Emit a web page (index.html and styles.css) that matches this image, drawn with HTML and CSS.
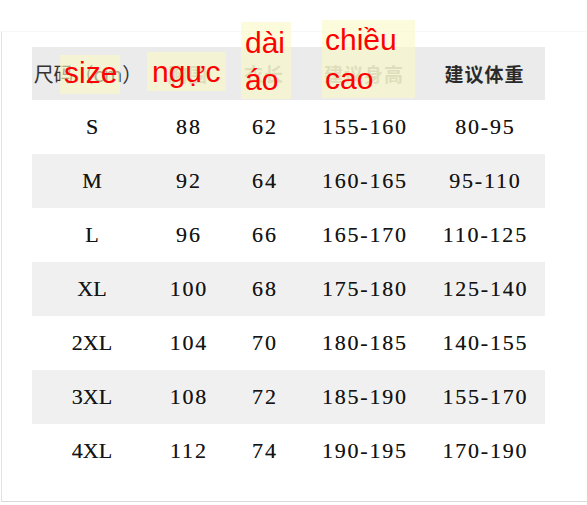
FILE: index.html
```html
<!DOCTYPE html>
<html lang="zh">
<head>
<meta charset="utf-8">
<title>Size chart</title>
<link rel="stylesheet" href="styles.css">
</head>
<body>
<div class="frame">
  <div class="chart">
    <div class="row head">
      <div class="cell h1">尺码（cm）</div>
      <div class="cell faded">胸围</div>
      <div class="cell faded">衣长</div>
      <div class="cell faded">建议身高</div>
      <div class="cell dark">建议体重</div>
    </div>
    <div class="row"><div class="cell c1">S</div><div class="cell">88</div><div class="cell">62</div><div class="cell">155-160</div><div class="cell">80-95</div></div>
    <div class="row alt"><div class="cell c1">M</div><div class="cell">92</div><div class="cell">64</div><div class="cell">160-165</div><div class="cell">95-110</div></div>
    <div class="row"><div class="cell c1">L</div><div class="cell">96</div><div class="cell">66</div><div class="cell">165-170</div><div class="cell">110-125</div></div>
    <div class="row alt"><div class="cell c1">XL</div><div class="cell">100</div><div class="cell">68</div><div class="cell">175-180</div><div class="cell">125-140</div></div>
    <div class="row"><div class="cell c1">2XL</div><div class="cell">104</div><div class="cell">70</div><div class="cell">180-185</div><div class="cell">140-155</div></div>
    <div class="row alt"><div class="cell c1">3XL</div><div class="cell">108</div><div class="cell">72</div><div class="cell">185-190</div><div class="cell">155-170</div></div>
    <div class="row"><div class="cell c1">4XL</div><div class="cell">112</div><div class="cell">74</div><div class="cell">190-195</div><div class="cell">170-190</div></div>
  </div>
  <div class="label l-size">size</div>
  <div class="label l-nguc">ngực</div>
  <div class="label l-dai">dài<br>áo</div>
  <div class="label l-chieu">chiều<br>cao</div>
</div>
</body>
</html>
```

FILE: styles.css
```css
html, body {
  margin: 0;
  padding: 0;
  background: #ffffff;
}

.frame {
  position: relative;
  margin: 31px 0 0 1px;
  height: 454px;
  border-left: 1px solid #e2e2e2;
  border-top: 1px solid #f7f7f7;
  border-bottom: 1px solid #d9d9d9;
  padding: 15px 0 0 30px;
  box-sizing: content-box;
}

.chart {
  width: 513px;
  display: flex;
  flex-direction: column;
}

.row {
  display: grid;
  grid-template-columns: 120px 72px 80px 120px 121px;
  height: 54px;
  align-items: center;
}

.row.head {
  height: 53px;
  background: #ebebeb;
}

.row.alt {
  background: #f0f0f0;
}

.cell {
  text-align: center;
  font-family: "Liberation Serif", serif;
  font-size: 22px;
  letter-spacing: 1.8px;
  padding-left: 1.8px;
  color: #141414;
  text-shadow: 0 0 0.5px rgba(0, 0, 0, 0.5);
}

.cell.c1 {
  letter-spacing: 0;
  padding-left: 0;
}

.head .cell {
  font-family: "Noto Sans CJK SC", sans-serif;
  font-size: 19px;
  letter-spacing: 1px;
  padding-left: 0;
  text-shadow: none;
}

.head .h1 {
  color: #333333;
  font-size: 20px;
  letter-spacing: 0;
  padding-right: 8px;
}

.head .faded {
  color: #b4b4b0;
  font-weight: 700;
}

.head .dark {
  color: #2a2a2a;
  font-weight: 700;
}

.label {
  position: absolute;
  box-sizing: border-box;
  background: rgba(250, 250, 197, 0.6);
  color: #ff0000;
  font-family: "Liberation Sans", Arial, sans-serif;
  font-size: 30px;
  padding: 0 4px;
  white-space: nowrap;
}

.l-size {
  left: 58px;
  top: 23px;
  width: 60px;
  height: 39px;
  line-height: 35px;
}

.l-nguc {
  left: 145px;
  top: 20px;
  width: 79px;
  height: 39px;
  line-height: 39px;
  padding-left: 5px;
}

.l-dai {
  left: 239px;
  top: -10px;
  width: 50px;
  height: 77px;
  line-height: 37px;
  padding-top: 2px;
}

.l-chieu {
  left: 320px;
  top: -12px;
  width: 93px;
  height: 78px;
  line-height: 39px;
  padding-left: 3px;
}
```
